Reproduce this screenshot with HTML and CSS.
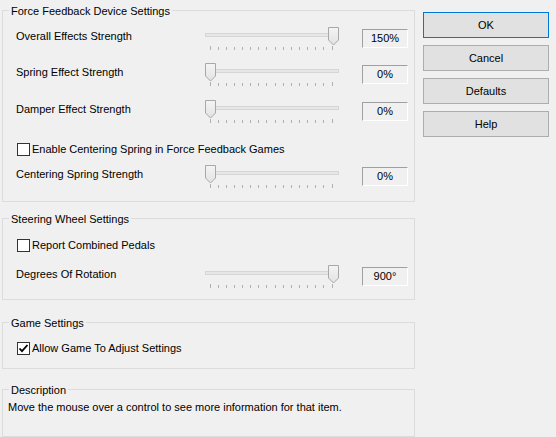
FILE: index.html
```html
<!DOCTYPE html>
<html lang="en">
<head>
  <meta charset="UTF-8">
  <title>Force Feedback Settings</title>
  <link rel="stylesheet" href="styles.css">
</head>
<body>
  <svg class="defs" width="0" height="0" aria-hidden="true">
    <defs>
      <linearGradient id="thumbFill" x1="0" y1="0" x2="0" y2="1">
        <stop offset="0" stop-color="#f4f4f4"/>
        <stop offset="1" stop-color="#e2e2e2"/>
      </linearGradient>
      <rect id="track" x="0.5" y="6.5" width="133" height="3" fill="#e7e7e7" stroke="#d6d6d6"/>
      <path id="ticks" stroke="#b0b0b0" fill="none"
        d="M5.5 19v4M13.5 20v3M21.5 20v3M29.5 20v3M37.5 20v3M45.5 20v3M53.5 20v3M61.5 20v3M70.5 20v3M78.5 20v3M86.5 20v3M94.5 20v3M102.5 20v3M110.5 20v3M118.5 20v3M127.5 19v4"/>
      <path id="thumb" d="M0.5 0.5H10.5V13L5.5 18L0.5 13Z" fill="url(#thumbFill)" stroke="#a8a8a8"/>
    </defs>
  </svg>

  <div class="dialog">
    <div class="settings">
      <section class="group group-ffb">
        <div class="caption">Force Feedback Device Settings</div>
        <div class="slider-row">
          <span class="label">Overall Effects Strength</span>
          <svg class="slider" width="134" height="23"><use href="#track"/><use href="#ticks"/><use href="#thumb" x="123"/></svg>
          <span class="value">150%</span>
        </div>
        <div class="slider-row">
          <span class="label">Spring Effect Strength</span>
          <svg class="slider" width="134" height="23"><use href="#track"/><use href="#ticks"/><use href="#thumb" x="0"/></svg>
          <span class="value">0%</span>
        </div>
        <div class="slider-row">
          <span class="label">Damper Effect Strength</span>
          <svg class="slider" width="134" height="23"><use href="#track"/><use href="#ticks"/><use href="#thumb" x="0"/></svg>
          <span class="value">0%</span>
        </div>
        <label class="check-row">
          <span class="box"></span>
          <span>Enable Centering Spring in Force Feedback Games</span>
        </label>
        <div class="slider-row">
          <span class="label">Centering Spring Strength</span>
          <svg class="slider" width="134" height="23"><use href="#track"/><use href="#ticks"/><use href="#thumb" x="0"/></svg>
          <span class="value">0%</span>
        </div>
      </section>

      <section class="group group-wheel">
        <div class="caption">Steering Wheel Settings</div>
        <label class="check-row">
          <span class="box"></span>
          <span>Report Combined Pedals</span>
        </label>
        <div class="slider-row">
          <span class="label">Degrees Of Rotation</span>
          <svg class="slider" width="134" height="23"><use href="#track"/><use href="#ticks"/><use href="#thumb" x="123"/></svg>
          <span class="value">900°</span>
        </div>
      </section>

      <section class="group group-game">
        <div class="caption">Game Settings</div>
        <label class="check-row">
          <span class="box">
            <svg width="11" height="11" viewBox="0 0 11 11"><path d="M1.5 5.5L4 8.2L9.5 2" fill="none" stroke="#000" stroke-width="1.8"/></svg>
          </span>
          <span>Allow Game To Adjust Settings</span>
        </label>
      </section>

      <section class="group group-desc">
        <div class="caption">Description</div>
        <p class="desc">Move the mouse over a control to see more information for that item.</p>
      </section>
    </div>

    <div class="buttons">
      <button class="btn btn-default">OK</button>
      <button class="btn">Cancel</button>
      <button class="btn">Defaults</button>
      <button class="btn">Help</button>
    </div>
  </div>
</body>
</html>
```

FILE: styles.css
```css
* {
  box-sizing: border-box;
}

body {
  margin: 0;
  background: #f0f0f0;
  font-family: 'Liberation Sans', Arial, sans-serif;
  font-size: 11px;
  color: #000;
  overflow: hidden;
}

.defs {
  position: absolute;
  width: 0;
  height: 0;
  overflow: hidden;
}

.dialog {
  display: flex;
  align-items: flex-start;
  gap: 8px;
  padding-left: 2px;
}

.settings {
  width: 413px;
  padding-top: 10px;
}

.group {
  border: 1px solid #dcdcdc;
}

.group-ffb {
  padding-bottom: 13px;
}

.group-wheel {
  margin-top: 16px;
  padding-bottom: 11px;
}

.group-game {
  margin-top: 22px;
  padding-bottom: 13px;
}

.group-desc {
  margin-top: 20px;
  height: 48px;
}

.caption {
  width: fit-content;
  margin: -7px 0 0 6px;
  padding: 0 2px;
  background: #f0f0f0;
  line-height: 14px;
}

.slider-row {
  display: flex;
  height: 23px;
  margin-top: 13px;
  padding: 0 6px 0 13px;
}

.caption + .slider-row {
  margin-top: 9px;
}

.slider-row + .slider-row + .slider-row {
  margin-top: 14px;
}

.slider-row .label {
  flex: 1;
  line-height: 18px;
}

.slider {
  display: block;
  margin-right: 23px;
}

.value {
  width: 46px;
  height: 19px;
  margin-top: 2px;
  border: 1px solid;
  border-color: #a0a0a0 #fff #fff #a0a0a0;
  text-align: center;
  line-height: 17px;
}

.check-row {
  display: flex;
  align-items: center;
  gap: 2px;
  height: 13px;
  margin-top: 20px;
  padding-left: 14px;
  line-height: 13px;
}

.caption + .check-row {
  margin-top: 12px;
}

.group-wheel .caption + .check-row {
  margin-top: 13px;
}

.group-ffb .check-row + .slider-row {
  margin-top: 9px;
}

.box {
  display: flex;
  align-items: center;
  justify-content: center;
  width: 13px;
  height: 13px;
  border: 1px solid #333;
  background: #fff;
}

.desc {
  margin: 3px 0 0;
  padding-left: 5px;
  line-height: 14px;
}

.buttons {
  display: flex;
  flex-direction: column;
  gap: 7px;
  width: 126px;
  margin-top: 12px;
}

.btn {
  height: 26px;
  padding: 0;
  background: #e1e1e1;
  border: 1px solid #adadad;
  font: inherit;
  color: #000;
}

.btn-default {
  border-color: #0078d7;
}
```
